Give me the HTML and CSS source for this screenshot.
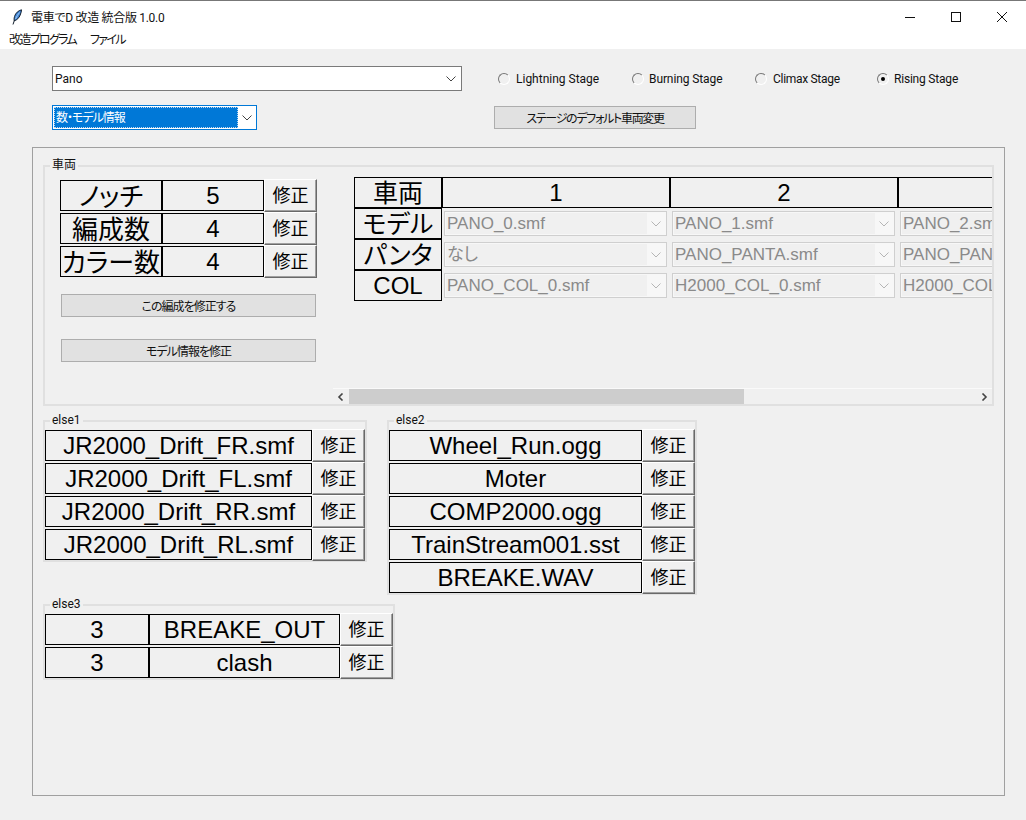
FILE: index.html
```html
<!DOCTYPE html>
<html lang="ja">
<head>
    <meta charset="UTF-8">
    <meta name="viewport" content="width=device-width, initial-scale=1.0">
    <title>電車でD 改造 統合版 1.0.0</title>
    <link rel="stylesheet" href="styles.css">
</head>
<body>
    <svg class="sprites" width="0" height="0">
        <symbol id="chevron" viewBox="0 0 10 6">
            <path d="M0.5 0.5L5 5L9.5 0.5" fill="none" stroke="currentColor" stroke-width="1"/>
        </symbol>
    </svg>

    <div class="titlebar">
        <svg class="app-icon" width="12" height="16" viewBox="0 0 12 16">
            <path d="M10.5 0.8C7.5 1.5 4.5 4 3.5 7.5C3 9.5 3 11 3.3 11.8C6 11 8 9 9.2 6C10 4 10.5 2.2 10.5 0.8Z" fill="#3f86d8" stroke="#14202e" stroke-width="1"/>
            <path d="M8.5 3.5C7 5.5 5.5 7.5 4.5 10" fill="none" stroke="#bcd9f5" stroke-width="0.8"/>
            <path d="M3.5 11L2 15.5" fill="none" stroke="#14202e" stroke-width="1"/>
        </svg>
        <span class="app-title">電車でD 改造 統合版 1.0.0</span>
        <div class="window-buttons">
            <svg width="10" height="10" viewBox="0 0 10 10"><path d="M0 5.5H10" stroke="#111" stroke-width="1"/></svg>
            <svg width="10" height="10" viewBox="0 0 10 10"><rect x="0.5" y="0.5" width="9" height="9" fill="none" stroke="#111" stroke-width="1"/></svg>
            <svg width="10" height="10" viewBox="0 0 10 10"><path d="M0 0L10 10M10 0L0 10" stroke="#111" stroke-width="1"/></svg>
        </div>
    </div>
    <div class="menubar">
        <span class="menu-item">改造プログラム</span>
        <span class="menu-item">ファイル</span>
    </div>

    <div class="controls">
        <div class="combo train-combo">
            <span class="combo-text">Pano</span>
            <svg class="chevron"><use href="#chevron"/></svg>
        </div>
        <div class="radios">
            <label class="radio radio-lightning"><i class="radio-mark"></i>Lightning Stage</label>
            <label class="radio radio-burning"><i class="radio-mark"></i>Burning Stage</label>
            <label class="radio radio-climax"><i class="radio-mark"></i>Climax Stage</label>
            <label class="radio radio-rising"><i class="radio-mark checked"></i>Rising Stage</label>
        </div>
    </div>
    <div class="controls second-row">
        <div class="combo mode-combo">
            <span class="combo-selected"><span>数・モデル情報</span></span>
            <svg class="chevron"><use href="#chevron"/></svg>
        </div>
        <button class="flat-btn stage-btn">ステージのデフォルト車両変更</button>
    </div>

    <div class="pane">
        <div class="frame vehicle-frame">
            <span class="frame-label">車両</span>
            <div class="vehicle-left">
                <div class="row">
                    <div class="cell cell-name jp">ノッチ</div>
                    <div class="cell cell-name">5</div>
                    <button class="fix-btn">修正</button>
                </div>
                <div class="row">
                    <div class="cell cell-name jp">編成数</div>
                    <div class="cell cell-name">4</div>
                    <button class="fix-btn">修正</button>
                </div>
                <div class="row">
                    <div class="cell cell-name jp">カラー数</div>
                    <div class="cell cell-name">4</div>
                    <button class="fix-btn">修正</button>
                </div>
                <button class="flat-btn wide-btn">この編成を修正する</button>
                <button class="flat-btn wide-btn">モデル情報を修正</button>
            </div>
            <div class="vehicle-right">
                <div class="car-scroll">
                    <div class="car-table">
                        <div class="cell car-head jp">車両</div>
                        <div class="cell car-col">1</div>
                        <div class="cell car-col">2</div>
                        <div class="cell car-col"></div>

                        <div class="cell car-head jp">モデル</div>
                        <div class="car-pick"><div class="pick"><span class="pick-text">PANO_0.smf</span><span class="pick-arrow"><svg class="chevron"><use href="#chevron"/></svg></span></div></div>
                        <div class="car-pick"><div class="pick"><span class="pick-text">PANO_1.smf</span><span class="pick-arrow"><svg class="chevron"><use href="#chevron"/></svg></span></div></div>
                        <div class="car-pick"><div class="pick"><span class="pick-text">PANO_2.smf</span><span class="pick-arrow"><svg class="chevron"><use href="#chevron"/></svg></span></div></div>

                        <div class="cell car-head jp">パンタ</div>
                        <div class="car-pick"><div class="pick"><span class="pick-text">なし</span><span class="pick-arrow"><svg class="chevron"><use href="#chevron"/></svg></span></div></div>
                        <div class="car-pick"><div class="pick"><span class="pick-text">PANO_PANTA.smf</span><span class="pick-arrow"><svg class="chevron"><use href="#chevron"/></svg></span></div></div>
                        <div class="car-pick"><div class="pick"><span class="pick-text">PANO_PANTA.smf</span><span class="pick-arrow"><svg class="chevron"><use href="#chevron"/></svg></span></div></div>

                        <div class="cell car-head">COL</div>
                        <div class="car-pick"><div class="pick"><span class="pick-text">PANO_COL_0.smf</span><span class="pick-arrow"><svg class="chevron"><use href="#chevron"/></svg></span></div></div>
                        <div class="car-pick"><div class="pick"><span class="pick-text">H2000_COL_0.smf</span><span class="pick-arrow"><svg class="chevron"><use href="#chevron"/></svg></span></div></div>
                        <div class="car-pick"><div class="pick"><span class="pick-text">H2000_COL_0.smf</span><span class="pick-arrow"><svg class="chevron"><use href="#chevron"/></svg></span></div></div>
                    </div>
                </div>
                <div class="scrollbar">
                    <svg class="scroll-arrow" width="7" height="8" viewBox="0 0 7 8"><path d="M5.5 0.5L2 4L5.5 7.5" fill="none" stroke="#444" stroke-width="1.6"/></svg>
                    <div class="scroll-track"><div class="scroll-thumb"></div></div>
                    <svg class="scroll-arrow" width="7" height="8" viewBox="0 0 7 8"><path d="M1.5 0.5L5 4L1.5 7.5" fill="none" stroke="#444" stroke-width="1.6"/></svg>
                </div>
            </div>
        </div>

        <div class="else-row">
            <div class="frame else-frame">
                <span class="frame-label">else1</span>
                <div class="rows">
                    <div class="row"><div class="cell cell-file1">JR2000_Drift_FR.smf</div><button class="fix-btn">修正</button></div>
                    <div class="row"><div class="cell cell-file1">JR2000_Drift_FL.smf</div><button class="fix-btn">修正</button></div>
                    <div class="row"><div class="cell cell-file1">JR2000_Drift_RR.smf</div><button class="fix-btn">修正</button></div>
                    <div class="row"><div class="cell cell-file1">JR2000_Drift_RL.smf</div><button class="fix-btn">修正</button></div>
                </div>
            </div>
            <div class="frame else-frame">
                <span class="frame-label">else2</span>
                <div class="rows">
                    <div class="row"><div class="cell cell-file2">Wheel_Run.ogg</div><button class="fix-btn">修正</button></div>
                    <div class="row"><div class="cell cell-file2">Moter</div><button class="fix-btn">修正</button></div>
                    <div class="row"><div class="cell cell-file2">COMP2000.ogg</div><button class="fix-btn">修正</button></div>
                    <div class="row"><div class="cell cell-file2">TrainStream001.sst</div><button class="fix-btn">修正</button></div>
                    <div class="row"><div class="cell cell-file2">BREAKE.WAV</div><button class="fix-btn">修正</button></div>
                </div>
            </div>
        </div>

        <div class="frame else-frame else3">
            <span class="frame-label">else3</span>
            <div class="rows">
                <div class="row"><div class="cell cell-num">3</div><div class="cell cell-sound">BREAKE_OUT</div><button class="fix-btn">修正</button></div>
                <div class="row"><div class="cell cell-num">3</div><div class="cell cell-sound">clash</div><button class="fix-btn">修正</button></div>
            </div>
        </div>
    </div>
</body>
</html>
```

FILE: styles.css
```css
* {
    box-sizing: border-box;
}

body {
    font-family: Roboto, "Noto Sans CJK JP", sans-serif;
    font-size: 12px;
    font-feature-settings: "palt";
    color: #111;
    background-color: #f0f0f0;
    margin: 0;
    width: 1026px;
    height: 820px;
    overflow: hidden;
}

button {
    font-family: inherit;
    font-feature-settings: inherit;
    padding: 0;
}

.sprites {
    display: block;
    height: 0;
}

/* window chrome */
.titlebar {
    height: 32px;
    background: white;
    border-top: 1px solid #777;
    display: flex;
    align-items: center;
    padding-left: 11px;
}

.app-title {
    margin-left: 8px;
    letter-spacing: -0.3px;
}

.window-buttons {
    margin-left: auto;
    display: flex;
    gap: 36px;
    padding-right: 19px;
}

.menubar {
    height: 17px;
    background: white;
    display: flex;
    gap: 14px;
    padding-left: 9px;
    line-height: 17px;
    letter-spacing: -1.7px;
}

/* top controls */
.controls {
    display: flex;
    align-items: center;
    margin: 17px 0 0 52px;
}

.second-row {
    margin-top: 14px;
}

.combo {
    height: 25px;
    background: white;
    display: flex;
    align-items: center;
    justify-content: space-between;
}

.train-combo {
    width: 410px;
    border: 1px solid #7a7a7a;
    padding: 0 3px 0 2px;
}

.mode-combo {
    width: 205px;
    border: 1px solid #0078d7;
    padding-left: 1px;
}

.combo-selected {
    width: 184px;
    height: 21px;
    background: #0078d7;
    color: white;
    outline: 1px dotted #b9d8f2;
    outline-offset: -1px;
    line-height: 23px;
    padding-left: 2px;
    letter-spacing: -1px;
}

.chevron {
    width: 10px;
    height: 6px;
    margin-right: 2px;
    color: #444;
}

.mode-combo .chevron {
    margin-right: 4px;
}

.radios {
    display: flex;
    margin-left: 36px;
}

.radio {
    display: flex;
    align-items: center;
    gap: 6px;
}

.radio-lightning {
    width: 134px;
}

.radio-burning {
    width: 123px;
    gap: 5px;
    letter-spacing: -0.1px;
}

.radio-climax {
    width: 122px;
    letter-spacing: -0.3px;
}

.radio-rising {
    gap: 5px;
    letter-spacing: -0.2px;
}

.radio-mark {
    width: 12px;
    height: 12px;
    border-radius: 50%;
    border: 1px solid;
    border-color: #777 #fff #fff #777;
    display: flex;
    align-items: center;
    justify-content: center;
}

.radio-mark.checked::after {
    content: "";
    width: 4px;
    height: 4px;
    border-radius: 50%;
    background: #000;
}

.flat-btn {
    background-color: #e1e1e1;
    border: 1px solid #adadad;
    font-size: 12px;
    letter-spacing: -1px;
    color: #111;
}

.stage-btn {
    width: 202px;
    height: 23px;
    margin-left: 237px;
    letter-spacing: -1.3px;
}

/* main pane */
.pane {
    width: 973px;
    height: 649px;
    margin: 17px 0 0 32px;
    border: 1px solid #a0a0a0;
    padding: 17px 0 0 10px;
}

.frame {
    position: relative;
    border: 2px solid #e0e0e0;
}

.frame-label {
    position: absolute;
    left: 5px;
    top: -9px;
    padding: 0 2px;
    font-size: 12px;
    line-height: 14px;
    background: #f0f0f0;
}

.vehicle-frame {
    width: 951px;
    height: 241px;
    display: flex;
}

.vehicle-left {
    width: 288px;
    padding: 12px 0 0 15px;
}

.row {
    display: flex;
    align-items: center;
    height: 33px;
}

.cell {
    height: 31px;
    border: 1px solid #000;
    display: flex;
    align-items: center;
    justify-content: center;
    font-family: "Liberation Sans", "Noto Sans CJK JP", sans-serif;
    font-size: 24px;
    color: #000;
    white-space: nowrap;
    flex-shrink: 0;
}

.jp {
    font-size: 26px;
    padding-bottom: 3px;
}

.cell-name {
    width: 102px;
}

.cell-file1 {
    width: 267px;
}

.cell-file2 {
    width: 253px;
}

.cell-num {
    width: 104px;
}

.cell-sound {
    width: 191px;
}

.fix-btn {
    width: 53px;
    height: 33px;
    flex-shrink: 0;
    background: #f0f0f0;
    border: 1px solid;
    border-color: #fff #696969 #696969 #fff;
    box-shadow: inset -1px -1px 0 #a0a0a0;
    font-family: "Noto Sans CJK JP", sans-serif;
    font-size: 18px;
    padding-bottom: 3px;
    color: #000;
}

.wide-btn {
    display: block;
    width: 255px;
    height: 23px;
    margin: 16px 0 0 1px;
}

.wide-btn + .wide-btn {
    margin-top: 22px;
}

.vehicle-right {
    width: 659px;
    display: flex;
    flex-direction: column;
}

.car-scroll {
    height: 221px;
    overflow: hidden;
    padding: 10px 0 0 21px;
}

.car-table {
    display: grid;
    grid-template-columns: 88px repeat(3, 228px);
    grid-auto-rows: 31px;
}

.car-head {
    height: 31px;
}

.car-head.jp {
    font-size: 25px;
}

.car-col {
    height: 31px;
}

.car-pick {
    padding: 3px 3px 0 2px;
}

.pick {
    height: 25px;
    border: 1px solid #cfcfcf;
    padding: 1px;
    background: #f7f7f7;
    display: flex;
    font-family: "Liberation Sans", "Noto Sans CJK JP", sans-serif;
    font-size: 17px;
    color: #8a8a8a;
    white-space: nowrap;
    overflow: hidden;
}

.pick-text {
    flex: 1;
    min-width: 0;
    background: #f0f0f0;
    line-height: 21px;
    padding-left: 1px;
}

.pick-arrow {
    width: 18px;
    display: flex;
    align-items: center;
    justify-content: center;
}

.pick .chevron {
    margin: 0;
    color: #b5b5b5;
}

.scrollbar {
    height: 16px;
    border-top: 1px solid #fafafa;
    display: flex;
    align-items: center;
    justify-content: space-between;
    padding: 0 4px;
}

.scroll-track {
    width: 627px;
    height: 15px;
}

.scroll-thumb {
    width: 395px;
    height: 15px;
    background: #cdcdcd;
}

.else-row {
    display: flex;
    align-items: flex-start;
    gap: 20px;
    margin-top: 14px;
}

.else-frame {
    width: max-content;
    padding-top: 7px;
}

.rows {
    margin-bottom: -1px;
}

.else3 {
    margin-top: 9px;
}
```
